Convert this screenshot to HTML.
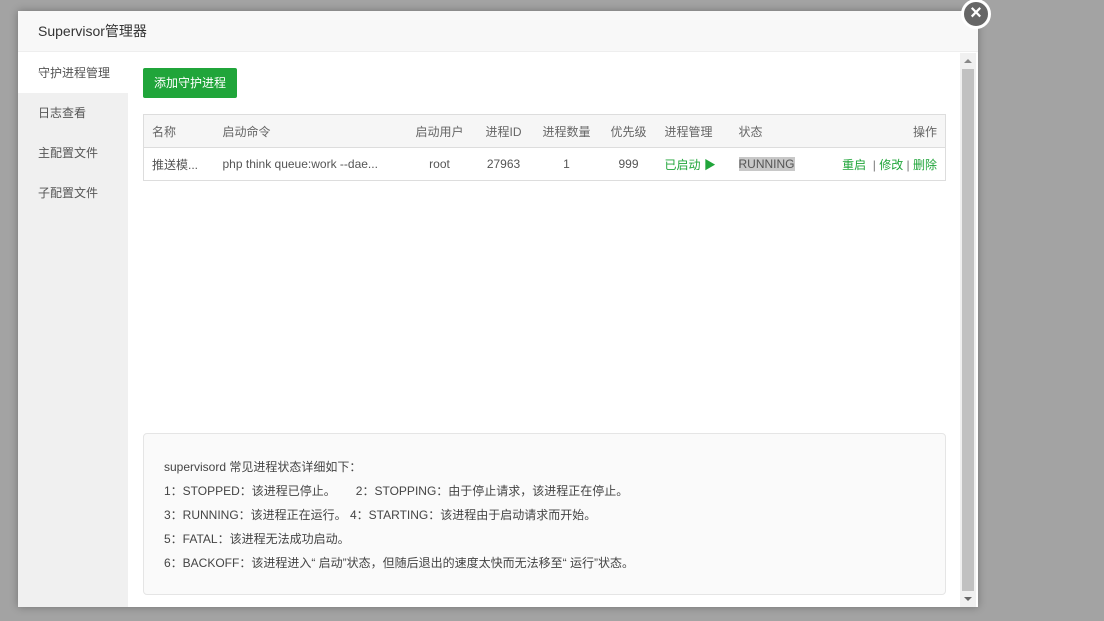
<!DOCTYPE html>
<html><head><meta charset="utf-8"><style>
*{margin:0;padding:0;box-sizing:border-box}
body{width:1104px;height:621px;overflow:hidden;background:#a3a3a3;font-family:"Liberation Sans","Noto Sans CJK SC",sans-serif;font-size:12px;color:#555;position:relative}
.modal{position:absolute;left:18px;top:11px;width:960px;height:596px;background:#fff;box-shadow:0 0 8px rgba(0,0,0,.3)}
.hd{height:41px;background:#f8f8f8;border-bottom:1px solid #eee;padding-left:20px;line-height:41px;font-size:14px;color:#333}
.nav{position:absolute;left:0;top:42px;width:110px;bottom:0;background:#f0f0f0}
.nav div{height:40px;line-height:40px;padding-left:20px;font-size:12px;color:#555}
.nav .on{background:#fff}
.close{position:absolute;left:943px;top:-12px;width:30px;height:30px;border-radius:50%;background:#666;border:3px solid #fff;color:#fff;text-align:center;line-height:22px;font-size:20px;font-weight:bold}
.sb{position:absolute;left:942px;top:42px;width:16px;bottom:0;background:#f0f0f0}
.sb .th{position:absolute;left:2px;top:16px;width:12px;bottom:16px;background:#c1c1c1}
.sb .a{position:absolute;left:4px;width:0;height:0;border-left:4px solid transparent;border-right:4px solid transparent}
.btn{position:absolute;left:125px;top:57px;width:94px;height:30px;background:#20a53a;color:#fff;border-radius:2px;line-height:30px;text-align:center;font-size:12px}
table{position:absolute;left:125px;top:103px;width:803px;border-collapse:collapse;border:1px solid #ddd;table-layout:fixed}
td{height:33px;padding:0 8px;border-bottom:1px solid #ddd;white-space:nowrap;overflow:hidden}
tr.h td{background:#f6f6f6;color:#666}
.g{color:#20a53a}
.run{background:#c8c8c8;color:#555}
.info{position:absolute;left:125px;top:422px;width:803px;height:162px;background:#fafafa;border:1px solid #e5e5e5;border-radius:4px;padding:21px 20px;font-size:12px;color:#444;line-height:24px}
</style></head><body>
<div class="modal">
<div class="hd">Supervisor管理器</div>
<div class="nav"><div class="on">守护进程管理</div><div>日志查看</div><div>主配置文件</div><div>子配置文件</div></div>
<div class="btn">添加守护进程</div>
<table>
<colgroup><col style="width:71px"><col style="width:190px"><col style="width:70px"><col style="width:58px"><col style="width:68px"><col style="width:56px"><col style="width:74px"><col style="width:86px"><col></colgroup>
<tr class="h"><td>名称</td><td>启动命令</td><td style="text-align:center">启动用户</td><td style="text-align:center">进程ID</td><td style="text-align:center">进程数量</td><td style="text-align:center">优先级</td><td>进程管理</td><td>状态</td><td style="text-align:right">操作</td></tr>
<tr><td>推送模...</td><td>php think queue:work --dae...</td><td style="text-align:center">root</td><td style="text-align:center">27963</td><td style="text-align:center">1</td><td style="text-align:center">999</td><td class="g">已启动 ▶</td><td><span class="run">RUNNING</span></td><td style="text-align:right" class="g">重启 &nbsp;<span style="color:#777">|</span> 修改 <span style="color:#777">|</span> 删除</td></tr>
</table>
<div class="info">supervisord 常见进程状态详细如下：<br>1：STOPPED：该进程已停止。&nbsp;&nbsp;&nbsp;&nbsp;&nbsp;&nbsp;2：STOPPING：由于停止请求，该进程正在停止。<br>3：RUNNING：该进程正在运行。 4：STARTING：该进程由于启动请求而开始。<br>5：FATAL：该进程无法成功启动。<br>6：BACKOFF：该进程进入“ 启动”状态，但随后退出的速度太快而无法移至“ 运行”状态。</div>
<div class="sb"><div class="a" style="top:6px;border-bottom:4px solid #888"></div><div class="th"></div><div class="a" style="bottom:6px;border-top:4px solid #666"></div></div>
<div class="close">×</div>
</div>
</body></html>
